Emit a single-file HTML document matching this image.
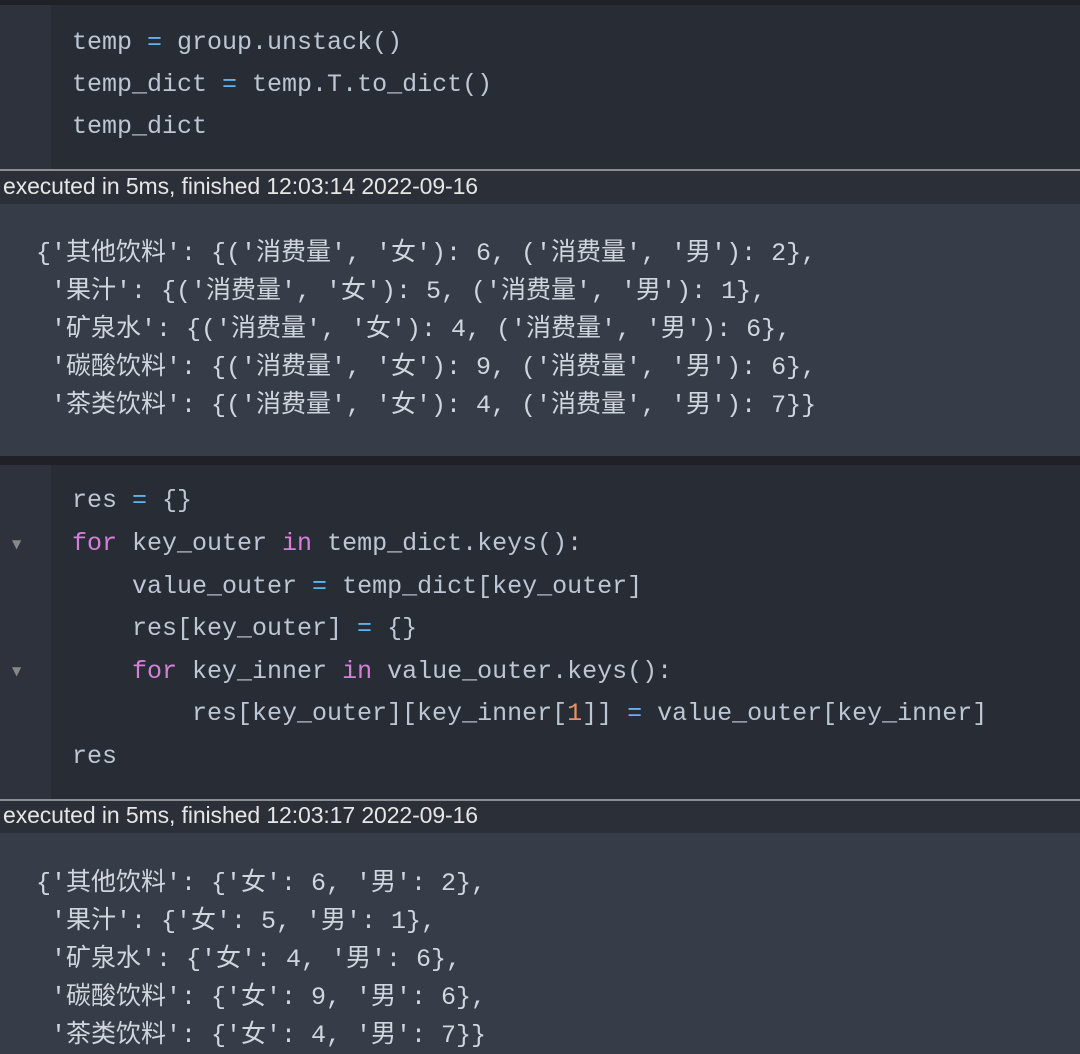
<!DOCTYPE html>
<html><head><meta charset="utf-8"><style>
body{margin:0;width:1080px;height:1054px;background:#282c34;position:relative;overflow:hidden;font-family:"Liberation Mono","Noto Sans CJK SC",monospace}
.b{position:absolute;left:0;width:1080px}
.l{position:absolute;white-space:pre;font-size:25px;color:#bcc6d4;line-height:30px}
.o{color:#d0d5de}
.e{position:absolute;left:3px;font-family:"Liberation Sans",sans-serif;font-size:23px;color:#e6e6e6;letter-spacing:-0.1px}
.k{color:#d57fd8}.q{color:#5fb3f0}.n{color:#e89068}
.ar{position:absolute;left:12px;color:#888;font-size:12px;font-family:"DejaVu Sans",sans-serif}
</style></head><body>
<div class="b" style="top:0;height:5px;background:#1f2127"></div>
<div class="b" style="top:5px;height:165px;background:#282c34"></div>
<div style="position:absolute;left:0;top:5px;width:51px;height:165px;background:#2d323c"></div>
<div class="l" style="left:72px;top:28px">temp <span class="q">=</span> group.unstack()</div>
<div class="l" style="left:72px;top:70px">temp_dict <span class="q">=</span> temp.T.to_dict()</div>
<div class="l" style="left:72px;top:112px">temp_dict</div>
<div class="b" style="top:169px;height:2px;background:#8a8d92"></div>
<div class="b" style="top:171px;height:33px;background:#2b2f37"></div>
<div class="e" style="top:173px">executed in 5ms, finished 12:03:14 2022-09-16</div>
<div class="b" style="top:204px;height:252px;background:#363c48"></div>
<div class="l o" style="left:36px;top:239px">{'其他饮料': {('消费量', '女'): 6, ('消费量', '男'): 2},</div>
<div class="l o" style="left:36px;top:277px"> '果汁': {('消费量', '女'): 5, ('消费量', '男'): 1},</div>
<div class="l o" style="left:36px;top:315px"> '矿泉水': {('消费量', '女'): 4, ('消费量', '男'): 6},</div>
<div class="l o" style="left:36px;top:353px"> '碳酸饮料': {('消费量', '女'): 9, ('消费量', '男'): 6},</div>
<div class="l o" style="left:36px;top:391px"> '茶类饮料': {('消费量', '女'): 4, ('消费量', '男'): 7}}</div>
<div class="b" style="top:456px;height:9px;background:#1f2127"></div>
<div style="position:absolute;left:0;top:465px;width:51px;height:335px;background:#2d323c"></div>
<div class="l" style="left:72px;top:486px">res <span class="q">=</span> {}</div>
<div class="ar" style="top:537px">▼</div>
<div class="l" style="left:72px;top:529px"><span class="k">for</span> key_outer <span class="k">in</span> temp_dict.keys():</div>
<div class="l" style="left:72px;top:572px">    value_outer <span class="q">=</span> temp_dict[key_outer]</div>
<div class="l" style="left:72px;top:614px">    res[key_outer] <span class="q">=</span> {}</div>
<div class="ar" style="top:664px">▼</div>
<div class="l" style="left:72px;top:657px">    <span class="k">for</span> key_inner <span class="k">in</span> value_outer.keys():</div>
<div class="l" style="left:72px;top:699px">        res[key_outer][key_inner[<span class="n">1</span>]] <span class="q">=</span> value_outer[key_inner]</div>
<div class="l" style="left:72px;top:742px">res</div>
<div class="b" style="top:799px;height:2px;background:#8a8d92"></div>
<div class="b" style="top:801px;height:32px;background:#2b2f37"></div>
<div class="e" style="top:802px">executed in 5ms, finished 12:03:17 2022-09-16</div>
<div class="b" style="top:833px;height:221px;background:#363c48"></div>
<div class="l o" style="left:36px;top:869px">{'其他饮料': {'女': 6, '男': 2},</div>
<div class="l o" style="left:36px;top:907px"> '果汁': {'女': 5, '男': 1},</div>
<div class="l o" style="left:36px;top:945px"> '矿泉水': {'女': 4, '男': 6},</div>
<div class="l o" style="left:36px;top:983px"> '碳酸饮料': {'女': 9, '男': 6},</div>
<div class="l o" style="left:36px;top:1021px"> '茶类饮料': {'女': 4, '男': 7}}</div>
</body></html>
